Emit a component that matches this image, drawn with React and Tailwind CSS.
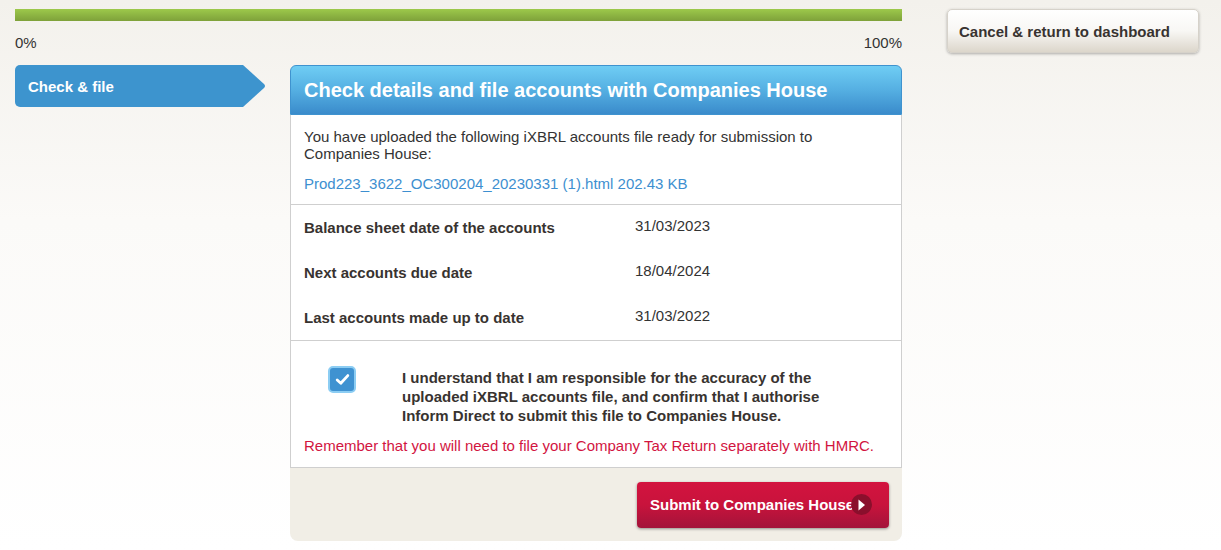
export default function App() {
  return (
    <div
      className="min-h-[550px] w-full bg-gradient-to-b from-[#f3f1ec] via-[#fbfaf8] via-40% to-white text-[#333] text-[15px]"
      style={{ fontFamily: '"Liberation Sans", Arial, sans-serif' }}
    >
      <div className="flex items-start pl-[15px] pt-[9px]">
        {/* left column */}
        <div className="w-[887px] flex flex-col">
          <div className="h-[12px] w-full bg-gradient-to-b from-[#9dc94b] to-[#7ea13a]" />
          <div className="flex justify-between mt-[13px] leading-[17px]">
            <span>0%</span>
            <span>100%</span>
          </div>
          <div className="flex items-start mt-[14px]">
            {/* nav tab */}
            <div className="flex w-[251px] h-[42px]">
              <div className="flex-1 bg-[#3d94ce] rounded-l-[5px] flex items-center pl-[13px] pt-[3px] text-white font-bold text-[15px]">
                Check &amp; file
              </div>
              <svg width="24" height="42" viewBox="0 0 24 42" className="block">
                <path d="M0 0 H1 L22 19 Q24 21 22 23 L1 42 H0 Z" fill="#3d94ce" />
              </svg>
            </div>
            {/* panel */}
            <div className="ml-[24px] w-[612px] flex flex-col">
              <div className="h-[50px] rounded-t-[6px] border border-[#3f93cf] bg-gradient-to-b from-[#6fcdf4] via-[#55afe2] to-[#3a8bcb] flex items-center pl-[13px]">
                <h1 className="text-white font-bold text-[20px] leading-[24px]">
                  Check details and file accounts with Companies House
                </h1>
              </div>
              <div className="bg-white border-x border-b border-[#cfcfcf]">
                <div className="px-[13px] pt-[13px] pb-[12px] border-b border-[#cfcfcf] leading-[17px]">
                  <p className="pr-[60px]">
                    You have uploaded the following iXBRL accounts file ready for submission to Companies House:
                  </p>
                  <p className="mt-[13px] text-[#3d8fd0]">
                    Prod223_3622_OC300204_20230331 (1).html 202.43 KB
                  </p>
                </div>
                <div className="border-b border-[#cfcfcf]">
                  {[
                    ["Balance sheet date of the accounts", "31/03/2023"],
                    ["Next accounts due date", "18/04/2024"],
                    ["Last accounts made up to date", "31/03/2022"],
                  ].map(([l, v]) => (
                    <div key={l} className="h-[45px] flex items-center px-[13px] pt-[2px]">
                      <span className="w-[331px] font-bold text-[#383330]">{l}</span>
                      <span className="-mt-[4px]">{v}</span>
                    </div>
                  ))}
                </div>
                <div className="px-[13px] pt-[27px] pb-[13px]">
                  <div className="flex items-start">
                    <div className="ml-[24px] mt-[-2px] w-[28px] h-[27px] rounded-[5px] bg-[#3f92d1] border-2 border-[#8ccdf3] flex items-center justify-center">
                      <svg width="15" height="13" viewBox="0 0 15 13">
                        <path d="M2.2 7 L5.8 10.2 L12.8 2.6" stroke="white" strokeWidth="2.8" fill="none" strokeLinecap="round" strokeLinejoin="round" />
                      </svg>
                    </div>
                    <p className="ml-[46px] w-[445px] font-bold leading-[19px] text-[#383330]">
                      I understand that I am responsible for the accuracy of the uploaded iXBRL accounts file, and confirm that I authorise Inform Direct to submit this file to Companies House.
                    </p>
                  </div>
                  <p className="mt-[12px] leading-[17px] text-[#d2153f]">
                    Remember that you will need to file your Company Tax Return separately with HMRC.
                  </p>
                </div>
              </div>
              <div className="bg-[#f1eee6] rounded-b-[8px] h-[73px] flex items-center justify-end pr-[13px]">
                <button className="h-[46px] w-[252px] rounded-[4px] bg-gradient-to-b from-[#d3133f] via-[#c8133c] to-[#a3133a] shadow-[0_1px_3px_rgba(0,0,0,0.4)] flex items-center pl-[13px] pt-[2px] text-white font-bold text-[15px]">
                  <span>Submit to Companies House</span>
                  <span className="ml-[-3px] -mt-[2px] w-[21px] h-[21px] rounded-full bg-[#8a0f2c] flex items-center justify-center">
                    <svg width="9" height="12" viewBox="0 0 9 12">
                      <path d="M1.5 0.5 L8 6 L1.5 11.5 Z" fill="white" />
                    </svg>
                  </span>
                </button>
              </div>
            </div>
          </div>
        </div>
        {/* right column */}
        <div className="ml-[45px] w-[252px]">
          <button className="w-full h-[44px] rounded-[5px] border border-[#d6d2ca] bg-gradient-to-b from-white via-[#f8f7f4] to-[#dcd6cb] shadow-[0_1px_3px_rgba(0,0,0,0.3)] text-left pl-[11px] pt-[3px] font-bold text-[15px] text-[#383330]">
            Cancel &amp; return to dashboard
          </button>
        </div>
      </div>
    </div>
  );
}
